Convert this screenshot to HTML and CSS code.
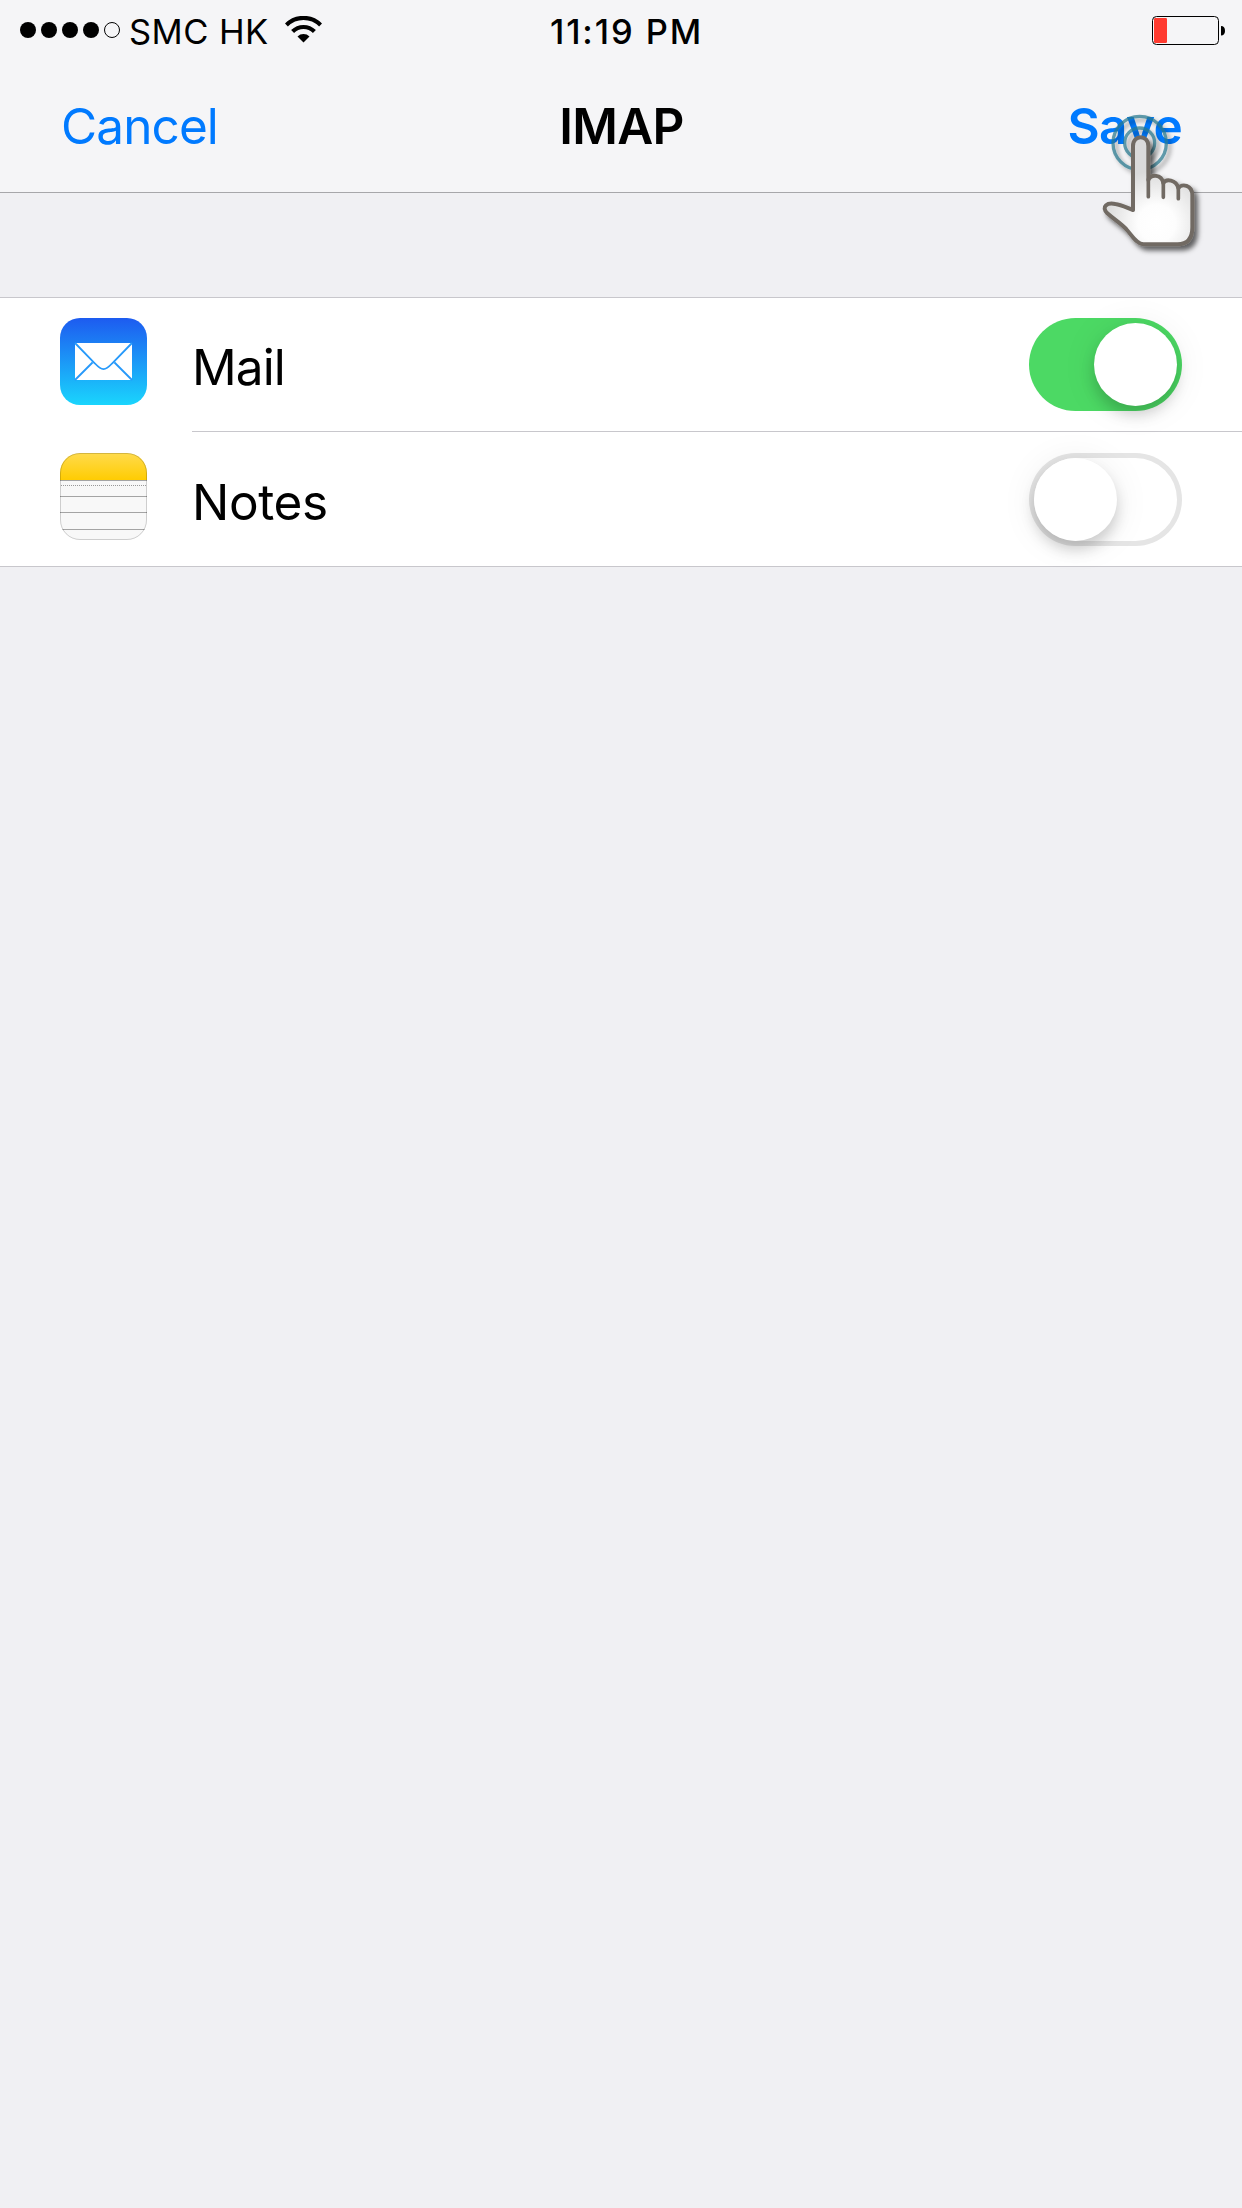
FILE: index.html
```html
<!DOCTYPE html>
<html lang="en">
<head>
<meta charset="utf-8">
<title>IMAP</title>
<link rel="stylesheet" href="styles.css">
</head>
<body>
<header class="header">
  <div class="status">
    <div class="carrier">
      <svg class="signal" width="100" height="16" viewBox="0 0 100 16">
        <circle cx="8" cy="8" r="8"/><circle cx="29" cy="8" r="8"/><circle cx="50" cy="8" r="8"/><circle cx="71" cy="8" r="8"/>
        <circle cx="92" cy="8" r="7.5" fill="none" stroke="#000" stroke-width="1"/>
      </svg>
      <span class="carrier-name">SMC HK</span>
      <svg class="wifi" width="37" height="27" viewBox="0 0 37 27">
        <path d="M1.400 9a24.200 24.200 0 0 1 34.200 0M7.600 15.500a15.400 15.400 0 0 1 21.800 0" fill="none" stroke="#000" stroke-width="4.200"/>
        <path d="M12.500 20.500a8.500 8.500 0 0 1 12 0l-6 6z"/>
      </svg>
    </div>
    <time class="clock">11:19 PM</time>
    <svg class="battery" width="73" height="29" viewBox="0 0 73 29">
      <rect x=".5" y=".5" width="66" height="28" rx="4" fill="none" stroke="#000"/>
      <rect x="2" y="2" width="13" height="25" rx="1.2" fill="#ff3b30"/>
      <path d="M69 10c2.700 0 4 2 4 4.800s-1.300 4.800-4 4.800z"/>
    </svg>
  </div>
  <nav class="nav">
    <span class="cancel">Cancel</span>
    <h1 class="title">IMAP</h1>
    <span class="save">Save</span>
  </nav>
</header>
<main class="group">
  <div class="row">
    <svg class="icon" width="87" height="87" viewBox="0 0 87 87">
      <defs><linearGradient id="mail" x2="0" y2="1"><stop stop-color="#1d5bf0"/><stop offset="1" stop-color="#1ad5fd"/></linearGradient></defs>
      <rect width="87" height="87" rx="20" fill="url(#mail)"/>
      <rect x="15" y="25" width="57" height="37" fill="#fff"/>
      <path d="M15 25L35 45.500C42 53 45 53 52 45.500L72 25M15 62L32.500 44.500M72 62L54.500 44.500" fill="none" stroke="#2699fa" stroke-width="1.800"/>
    </svg>
    <div class="cell cell-line">
      <span class="label label-mail">Mail</span>
      <div class="switch switch-on"><div class="knob"></div></div>
    </div>
  </div>
  <div class="row">
    <svg class="icon" width="87" height="87" viewBox="0 0 87 87">
      <defs>
        <linearGradient id="pad" x2="0" y2="1"><stop stop-color="#ffdb4d"/><stop offset="1" stop-color="#ffcc02"/></linearGradient>
        <clipPath id="round"><rect width="87" height="87" rx="20"/></clipPath>
      </defs>
      <g clip-path="url(#round)">
        <rect width="87" height="87" fill="#f8f8f8"/>
        <rect width="87" height="27" fill="url(#pad)"/>
        <path d="M0 27.500h87M0 43.500h87M0 59.500h87M0 76.500h87" stroke="#a4a4a4"/>
        <path d="M1 32.500h86" stroke="#999" stroke-dasharray="1 1"/>
      </g>
      <rect x=".5" y=".5" width="86" height="86" rx="19.500" fill="none" stroke="#000" stroke-opacity=".17"/>
    </svg>
    <div class="cell">
      <span class="label label-notes">Notes</span>
      <div class="switch"><div class="knob"></div></div>
    </div>
  </div>
</main>
<svg class="pointer" width="202" height="270" viewBox="0 0 606 810">
  <defs>
    <radialGradient id="skin" gradientUnits="userSpaceOnUse" cx="350" cy="670" r="160"><stop stop-color="#fff"/><stop offset=".35" stop-color="#fdfdfd"/><stop offset="1" stop-color="#dadada"/></radialGradient>
    <filter id="shadow" x="-20%" y="-20%" width="150%" height="150%"><feDropShadow dx="11" dy="13" stdDeviation="8" flood-color="#000" flood-opacity=".6"/></filter>
    <filter id="soft" x="-20%" y="-20%" width="150%" height="150%"><feDropShadow dx="10" dy="10" stdDeviation="7" flood-color="#000" flood-opacity=".45"/></filter>
  </defs>
  <g fill="none" stroke="#28788f" stroke-opacity=".72" stroke-width="10" filter="url(#soft)">
    <circle cx="299" cy="429" r="80"/>
    <circle cx="299" cy="429" r="45"/>
  </g>
  <g filter="url(#shadow)" stroke="#716a63" stroke-width="12" stroke-linejoin="round" stroke-linecap="round">
    <path fill="url(#skin)" d="M279 630V438C279 403 325 403 325 438V540C333 522 364 522 370 549C378 536 408 538 415 564C425 550 457 554 457 586V682C457 716 443 733 413 733H310C287 730 276 706 261 690C245 671 223 659 202 640C182 619 202 607 226 612C244 614 262 624 279 630Z"/>
    <path fill="none" d="M325 538V590M370 550V592M415 565V596" stroke-width="11"/>
  </g>
</svg>
</body>
</html>
```
FILE: styles.css
```css
* { box-sizing: border-box; }
body {
  margin: 0;
  min-height: 2208px;
  background: #f0f0f3;
  color: #000;
  font-family: Inter, "Liberation Sans", sans-serif;
  position: relative;
}
svg { display: block; flex: none; }
.header {
  height: 193px;
  background: #f5f5f7;
  border-bottom: 1px solid #a7a7aa;
}
.status {
  height: 60px;
  padding: 0 17px 0 20px;
  display: grid;
  grid-template-columns: 1fr auto 1fr;
  align-items: start;
  font-size: 34.5px;
  line-height: 63px;
}
.carrier { display: flex; white-space: nowrap; }
.signal { margin-top: 22px; }
.carrier-name { width: 148px; margin-left: 9px; letter-spacing: 0.45px; }
.wifi { margin: 16px 0 0 8px; }
.clock { padding-left: 8px; font-weight: 550; letter-spacing: 1.9px; }
.battery { margin-top: 16px; justify-self: end; }
.nav {
  height: 132px;
  padding: 0 60px 0 61px;
  display: grid;
  grid-template-columns: 1fr auto 1fr;
  font-size: 49.5px;
  line-height: 132px;
  color: #007aff;
}
.cancel { letter-spacing: -0.9px; }
.title { margin: 0; font-size: inherit; font-weight: 590; letter-spacing: -0.7px; color: #000; }
.save { justify-self: end; font-weight: 590; letter-spacing: -0.7px; }
.group {
  margin-top: 104px;
  height: 270px;
  background: #fff;
  border-top: 1px solid #c8c7cc;
  border-bottom: 1px solid #c8c7cc;
}
.row { display: flex; height: 135px; padding-left: 60px; }
.row:first-child { height: 134px; }
.icon { margin-top: 20px; }
.row + .row .icon, .row + .row .switch { margin-top: 21px; }
.cell {
  flex: 1;
  margin-left: 45px;
  padding-right: 60px;
  display: flex;
  justify-content: space-between;
}
.cell-line { border-bottom: 1px solid #c8c7cc; }
.label { font-size: 49.5px; line-height: 138px; height: 133px; }
.label-mail { letter-spacing: -0.9px; }
.label-notes { line-height: 140px; letter-spacing: -0.4px; }
.switch {
  width: 153px;
  height: 93px;
  margin-top: 20px;
  padding: 5px;
  border-radius: 47px;
  box-shadow: inset 0 0 0 5px #e5e5e5;
  display: flex;
}
.switch-on { background: #4cd964; box-shadow: none; justify-content: flex-end; }
.knob {
  width: 83px;
  height: 83px;
  border-radius: 50%;
  background: #fff;
  box-shadow: 0 9px 14px rgba(0, 0, 0, .17), 0 3px 36px rgba(0, 0, 0, .08);
}
.pointer { position: absolute; left: 1040px; top: 0; }
```
